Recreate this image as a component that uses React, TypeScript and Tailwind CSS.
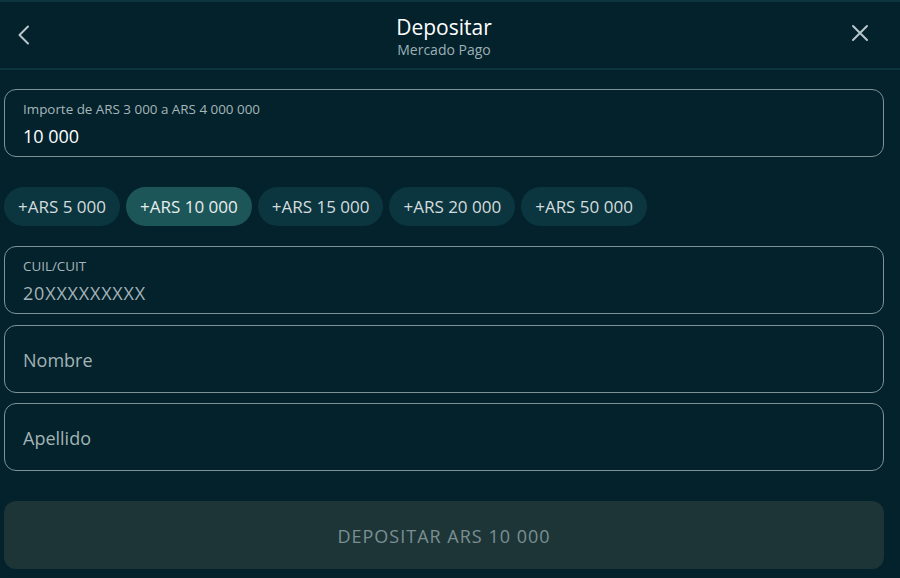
import React from "react";

const chips = ["+ARS 5 000", "+ARS 10 000", "+ARS 15 000", "+ARS 20 000", "+ARS 50 000"];

export default function App() {
  return (
    <div
      className="w-[900px] h-[578px] bg-[#03222c] overflow-hidden text-white"
      style={{ fontFamily: '"Open Sans", "Noto Sans", sans-serif' }}
    >
      {/* Header */}
      <div className="h-[70px] border-t-2 border-b-2 border-[#0d3540]">
        <div className="w-[888px] h-full relative flex flex-col items-center justify-center">
          <button className="absolute left-[16px] top-[22px] w-[16px] h-[22px] flex items-center justify-center">
            <svg width="14" height="20" viewBox="0 0 14 20" fill="none">
              <polyline points="11,1.5 2.5,10 11,18.5" stroke="#b9c6ca" strokeWidth="2" strokeLinecap="round" strokeLinejoin="round" />
            </svg>
          </button>
          <div className="text-[21px] leading-[27px] text-white mt-[2px]">Depositar</div>
          <div className="text-[14px] leading-[18px] text-[#9eb0b4]">Mercado Pago</div>
          <button className="absolute left-[851px] top-[22px] w-[18px] h-[18px] flex items-center justify-center">
            <svg width="18" height="18" viewBox="0 0 18 18" fill="none">
              <path d="M2 2 L16 16 M16 2 L2 16" stroke="#b9c6ca" strokeWidth="2" strokeLinecap="round" />
            </svg>
          </button>
        </div>
      </div>

      <div className="w-[888px] px-[4px] flex flex-col">
        {/* Amount input */}
        <div className="mt-[19px] h-[68px] rounded-[12px] border border-[#7f9296] px-[18px] pt-[10px]">
          <div className="text-[13.4px] leading-[18px] text-[#a7b6ba]">Importe de ARS 3 000 a ARS 4 000 000</div>
          <div className="text-[18px] leading-[24px] text-white mt-[6px]">10 000</div>
        </div>

        {/* Chips */}
        <div className="mt-[30px] flex gap-[6px]">
          {chips.map((c, i) => (
            <div
              key={c}
              className={
                i === 1
                  ? "h-[39px] px-[14px] rounded-full bg-[#1d5658] flex items-center text-[17px] text-[#e8eeee]"
                  : "h-[39px] px-[14px] rounded-full bg-[#0b3640] flex items-center text-[17px] text-[#d4dcdd]"
              }
            >
              {c}
            </div>
          ))}
        </div>

        {/* CUIL */}
        <div className="mt-[20px] h-[68px] rounded-[12px] border border-[#7f9296] px-[18px] pt-[10px]">
          <div className="text-[13.4px] leading-[18px] text-[#a7b6ba]">CUIL/CUIT</div>
          <div className="text-[18px] leading-[24px] text-[#a3b3b6] mt-[6px] tracking-[0.8px]">20XXXXXXXXX</div>
        </div>

        {/* Nombre */}
        <div className="mt-[11px] h-[68px] rounded-[12px] border border-[#7f9296] px-[18px] flex items-center">
          <div className="text-[18px] leading-[24px] text-[#a3b3b6] mt-[2px]">Nombre</div>
        </div>

        {/* Apellido */}
        <div className="mt-[10px] h-[68px] rounded-[12px] border border-[#7f9296] px-[18px] flex items-center">
          <div className="text-[18px] leading-[24px] text-[#a3b3b6] mt-[2px]">Apellido</div>
        </div>

        {/* Button */}
        <div className="mt-[30px] h-[68px] rounded-[12px] bg-[#1e3538] flex items-center justify-center">
          <span className="text-[18px] text-[#7a8f92] tracking-[1px] mt-[3px]">DEPOSITAR ARS 10 000</span>
        </div>
      </div>
    </div>
  );
}
